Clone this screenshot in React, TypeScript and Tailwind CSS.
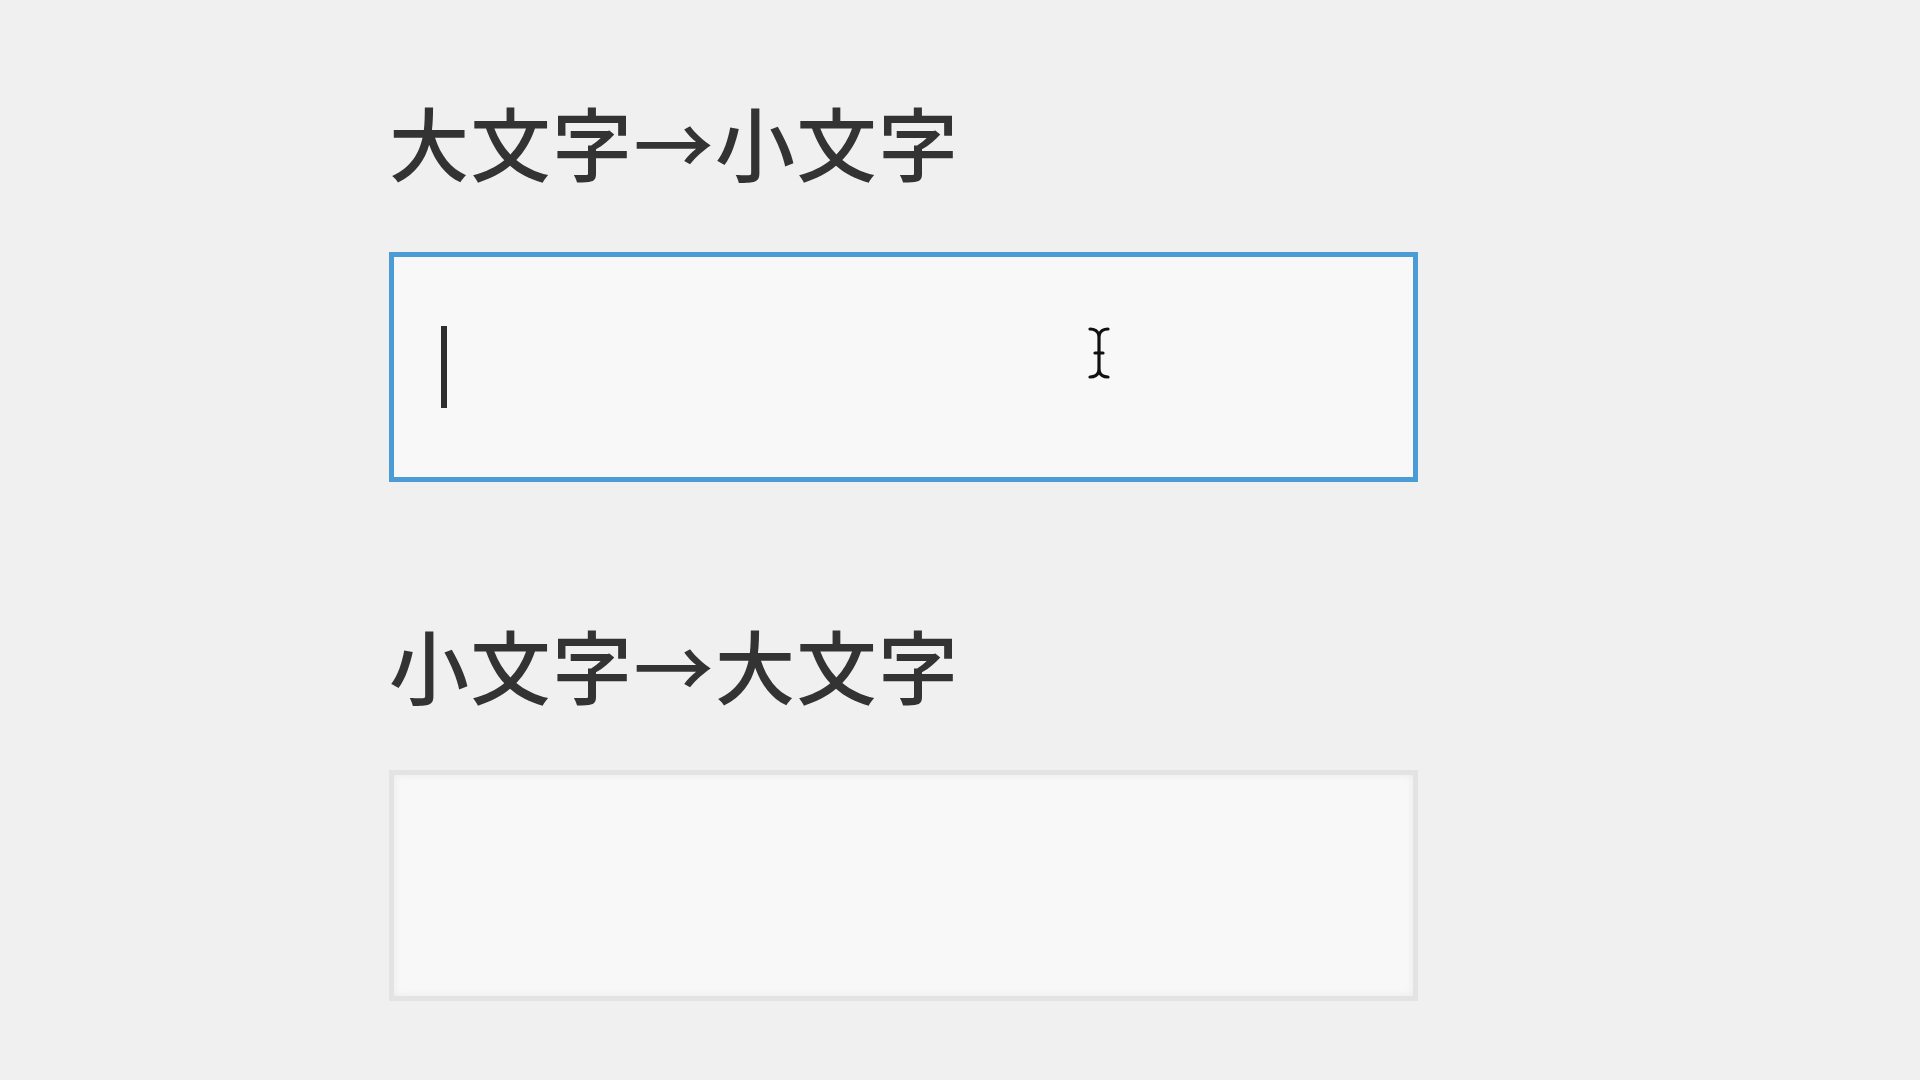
export default function App() {
  const font = { fontFamily: '"Noto Sans CJK JP", "Noto Sans", sans-serif' };

  return (
    <div className="min-h-screen w-full bg-[#f0f0f0]" style={font}>
      <div className="ml-[389px] w-[1029px] pt-[100px]">
        {/* 大文字 → 小文字 */}
        <h2 className="h-[80px] text-[80px] font-medium leading-none tracking-[1.5px] text-[#333333] whitespace-nowrap">
          大文字→小文字
        </h2>
        <div className="relative mt-[72px] flex h-[230px] items-center border-[5px] border-[#4b9bd4] bg-[#f8f8f8] pl-[47px]">
          <div className="h-[82px] w-[6px] bg-[#2e2e2e]" />
          {/* mouse I-beam pointer */}
          <svg
            className="absolute left-[693px] top-[69px]"
            width="24"
            height="54"
            viewBox="0 0 24 54"
            fill="none"
            stroke="#111"
            strokeWidth="3.2"
            strokeLinecap="round"
          >
            <path d="M3 3 Q10 3 12 9 Q14 3 21 3" />
            <path d="M12 9 V45" />
            <path d="M8 27 H16" />
            <path d="M3 51 Q10 51 12 45 Q14 51 21 51" />
          </svg>
        </div>

        {/* 小文字 → 大文字 */}
        <h2 className="mt-[141px] h-[80px] text-[80px] font-medium leading-none tracking-[1.5px] text-[#333333] whitespace-nowrap">
          小文字→大文字
        </h2>
        <div className="mt-[67px] h-[231px] border-[5px] border-[#e3e3e3] bg-[#f8f8f8] shadow-[inset_0_0_8px_rgba(0,0,0,0.06)]" />
      </div>
    </div>
  );
}
